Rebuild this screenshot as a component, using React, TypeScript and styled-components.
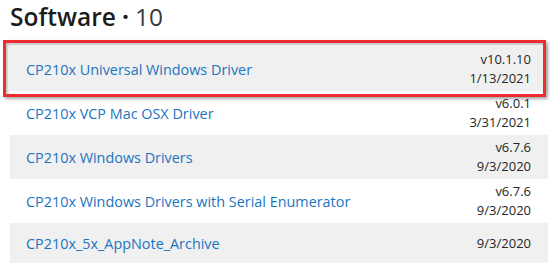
import styled, { createGlobalStyle } from "styled-components";

interface SoftwareItem {
  id: number;
  name: string;
  version?: string;
  date: string;
  highlighted?: boolean;
}

const items: SoftwareItem[] = [
  { id: 1, name: "CP210x Universal Windows Driver", version: "v10.1.10", date: "1/13/2021", highlighted: true },
  { id: 2, name: "CP210x VCP Mac OSX Driver", version: "v6.0.1", date: "3/31/2021" },
  { id: 3, name: "CP210x Windows Drivers", version: "v6.7.6", date: "9/3/2020" },
  { id: 4, name: "CP210x Windows Drivers with Serial Enumerator", version: "v6.7.6", date: "9/3/2020" },
  { id: 5, name: "CP210x_5x_AppNote_Archive", date: "9/3/2020" },
];

const GlobalStyle = createGlobalStyle`
  body {
    margin: 0;
    background: #ffffff;
    font-family: "Open Sans", "Liberation Sans", sans-serif;
  }
`;

const Section = styled.section`
  width: 538px;
  padding-left: 10px;
`;

const Title = styled.h2`
  margin: 0;
  height: 47px;
  font-size: 24.5px;
  line-height: 34px;
  font-weight: 600;
  color: #1c1c1c;
`;

const Dot = styled.span`
  margin: 0 6px 0 6px;
  font-weight: 700;
`;

const Count = styled.span`
  font-weight: 400;
  color: #3a3a3a;
`;

const List = styled.div`
  display: flex;
  flex-direction: column;
`;

const Row = styled.div<{ $shaded: boolean }>`
  position: relative;
  display: flex;
  align-items: center;
  justify-content: space-between;
  box-sizing: border-box;
  min-height: 40px;
  padding: 3px 17px 3px 16px;
  background-color: ${({ $shaded }) => ($shaded ? "#f0f0f0" : "#ffffff")};
`;

const Highlight = styled.div`
  position: absolute;
  z-index: 1;
  left: -7px;
  top: -7px;
  right: 2px;
  bottom: -6px;
  border: 3px solid #ee2b2e;
  box-shadow: 2px 2px 3px rgba(0, 0, 0, 0.35),
    inset 2px 2px 3px rgba(0, 0, 0, 0.25);
  pointer-events: none;
`;

const Name = styled.a`
  font-size: 14.4px;
  line-height: 19px;
  color: #1b74bf;
  text-decoration: none;
  cursor: pointer;
`;

const Meta = styled.div`
  display: flex;
  flex-direction: column;
  align-items: flex-end;
  font-size: 13px;
  color: #262626;
`;

const MetaLine = styled.div`
  height: 19px;
  line-height: 19px;
`;

export default function App() {
  return (
    <>
      <GlobalStyle />
      <Section>
        <Title>
          Software<Dot>·</Dot>
          <Count>10</Count>
        </Title>
        <List>
          {items.map((item, index) => (
            <Row key={item.id} $shaded={index % 2 === 0}>
              <Name>{item.name}</Name>
              <Meta>
                {item.version && <MetaLine>{item.version}</MetaLine>}
                <MetaLine>{item.date}</MetaLine>
              </Meta>
              {item.highlighted && <Highlight />}
            </Row>
          ))}
        </List>
      </Section>
    </>
  );
}
